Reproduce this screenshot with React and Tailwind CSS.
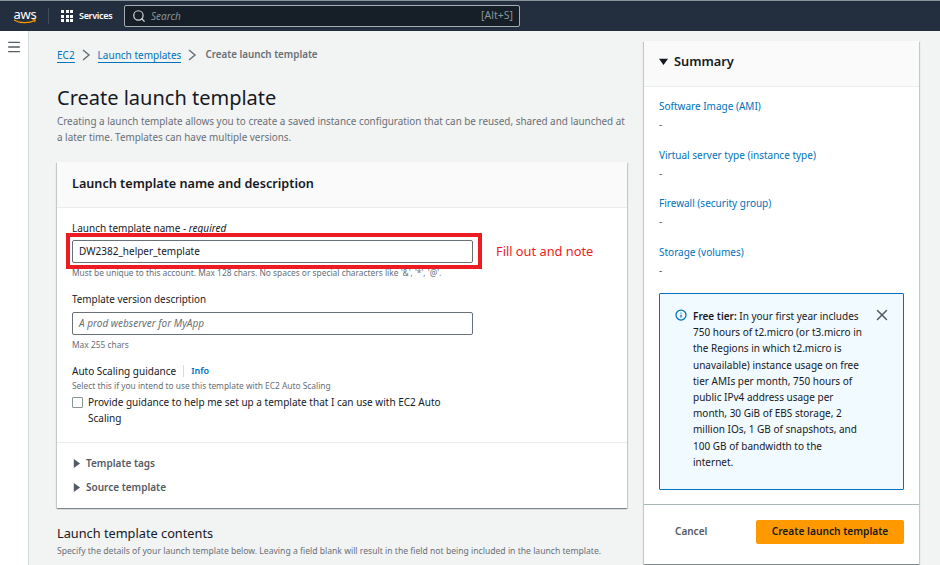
import React from 'react';
import { Menu, Search, Info, X } from 'lucide-react';

const font = "font-['Noto_Sans','Open_Sans',sans-serif]";

const Caret = ({ open }) => (
  <svg width="9" height="9" viewBox="0 0 10 10" className="shrink-0">
    {open ? <path d="M0 2h10L5 9z" fill="#16191f" /> : <path d="M2 0v10l7-5z" fill="#545b64" />}
  </svg>
);

const Chevron = ({ wide }) => (
  <svg width="9" height="12" viewBox="0 0 9 12" fill="none" stroke="#687078" strokeWidth="1.5" className={wide ? 'ml-[7px] mr-[8px]' : 'mx-[7px]'}>
    <path d="M1 1l6 5-6 5" />
  </svg>
);

const AwsLogo = () => (
  <div className="flex flex-col items-center w-[24px]">
    <span className="text-[13px] leading-[12px] text-white tracking-[-0.2px]">aws</span>
    <svg width="24" height="5" viewBox="0 0 24 5" fill="none" className="-mt-[1px]">
      <path d="M1 1c6 3.5 15 3.5 21 .5" stroke="#ff9900" strokeWidth="1.2" />
      <path d="M19.5 .6l3 .2-1 2.4" stroke="#ff9900" strokeWidth="1" />
    </svg>
  </div>
);

const GridIcon = () => (
  <div className="grid grid-cols-3 gap-[1.5px] w-[12px]">
    {Array.from({ length: 9 }).map((_, i) => (
      <span key={i} className="w-[3px] h-[3px] bg-white" />
    ))}
  </div>
);

const summary = [
  'Software Image (AMI)',
  'Virtual server type (instance type)',
  'Firewall (security group)',
  'Storage (volumes)',
];

export default function App() {
  return (
    <div className={`w-[940px] h-[565px] overflow-hidden flex flex-col ${font}`}>
      {/* Top nav */}
      <header className="h-[31px] shrink-0 bg-[#232f3e] border-t border-[#8a929b] flex items-center pl-[13px]">
        <AwsLogo />
        <div className="w-px h-[16px] bg-[#414d5c] ml-[11px] mr-[12px]" />
        <GridIcon />
        <span className="ml-[6px] w-[33px] whitespace-nowrap text-[9px] font-semibold text-white tracking-[-0.3px]">Services</span>
        <div className="ml-[12px] w-[396px] h-[22px] bg-[#161e28] border border-[#a5acb3] rounded-[2px] flex items-center pl-[7px] pr-[6px]">
          <Search size={14} color="#d5dbdb" strokeWidth={2} />
          <span className="ml-[5px] text-[10px] italic text-[#879596]">Search</span>
          <span className="ml-auto text-[10.5px] text-[#879596]">[Alt+S]</span>
        </div>
      </header>

      <div className="flex flex-1 min-h-0">
        {/* Side rail */}
        <aside className="w-[29px] shrink-0 bg-white border-r border-[#d5dbdb] pt-[8px] pl-[6px]">
          <Menu size={16} color="#545b64" strokeWidth={2} />
        </aside>

        <main className="flex-1 bg-[#f2f3f3] flex pl-[28px] gap-[17px] min-w-0">
          {/* Form column */}
          <div className="w-[570px] shrink-0">
            <nav className="flex items-center h-[14px] mt-[17px] text-[10px] leading-[14px]">
              <span className="text-[#0073bb] border-b border-[#0073bb]">EC2</span>
              <Chevron />
              <span className="text-[#0073bb] border-b border-[#0073bb]">Launch templates</span>
              <Chevron wide />
              <span className="font-semibold text-[9.8px] text-[#687078]">Create launch template</span>
            </nav>

            <h1 className="mt-[22px] text-[20px] leading-[28px] text-[#16191f]">Create launch template</h1>
            <p className="mt-[1px] text-[9.9px] leading-[16px] text-[#687078]">
              Creating a launch template allows you to create a saved instance configuration that can be reused, shared and launched at a later time. Templates can have multiple versions.
            </p>

            {/* Name and description card */}
            <section className="mt-[17px] bg-white shadow-[0_1px_1px_0_rgba(0,28,36,0.3),1px_1px_1px_0_rgba(0,28,36,0.15),-1px_1px_1px_0_rgba(0,28,36,0.15)]">
              <div className="h-[46px] pb-[2px] bg-[#fafafa] border-b border-[#eaeded] flex items-center px-[15px]">
                <h2 className="text-[12.65px] font-semibold text-[#16191f]">Launch template name and description</h2>
              </div>

              <div className="px-[15px] pt-[13px] pb-[16px] border-b border-[#eaeded]">
                <label className="block text-[10px] leading-[14px] text-[#16191f]">
                  Launch template name - <span className="italic">required</span>
                </label>
                <div className="relative mt-[5px] w-[401px]">
                  <div className="h-[23px] border border-[#687078] rounded-[2px] flex items-center px-[6px] text-[10px] text-[#16191f]">
                    DW2382_helper_template
                  </div>
                  {/* Annotation over the screenshot */}
                  <div className="absolute -left-[6px] -top-[7px] w-[416px] h-[36px] border-[4px] border-[#ed1c24]" />
                  <span className="absolute left-[424px] -top-[1px] whitespace-nowrap text-[12.8px] leading-[24px] text-[#ed1c24]">
                    Fill out and note
                  </span>
                </div>
                <p className="mt-[3px] text-[8.4px] leading-[13px] text-[#687078]">
                  Must be unique to this account. Max 128 chars. No spaces or special characters like '&amp;', '*', '@'.
                </p>

                <label className="block mt-[13px] text-[9.9px] leading-[14px] text-[#16191f]">Template version description</label>
                <div className="mt-[6px] w-[401px] h-[23px] border border-[#687078] rounded-[2px] flex items-center px-[6px] text-[10px] italic text-[#687078]">
                  A prod webserver for MyApp
                </div>
                <p className="mt-[3px] text-[8.4px] leading-[13px] text-[#687078]">Max 255 chars</p>

                <div className="mt-[13px] flex items-center text-[10px] leading-[14px]">
                  <span className="text-[#16191f]">Auto Scaling guidance</span>
                  <span className="w-px h-[12px] bg-[#d5dbdb] mx-[7px]" />
                  <span className="font-semibold text-[#0073bb] text-[9px]">Info</span>
                </div>
                <p className="mt-[1px] text-[8.4px] leading-[13px] text-[#687078]">
                  Select this if you intend to use this template with EC2 Auto Scaling
                </p>
                <div className="mt-[2px] flex items-start">
                  <span className="mt-[3px] w-[11px] h-[11px] shrink-0 border border-[#879596] rounded-[1px] bg-white" />
                  <span className="ml-[5px] w-[360px] text-[10px] leading-[16px] text-[#16191f]">
                    Provide guidance to help me set up a template that I can use with EC2 Auto Scaling
                  </span>
                </div>
              </div>

              <div className="pl-[15px] pt-[13px] pb-[14px] flex flex-col gap-[10px]">
                <div className="flex items-center gap-[5px] h-[14px]">
                  <Caret />
                  <span className="text-[10px] font-semibold text-[#545b64]">Template tags</span>
                </div>
                <div className="flex items-center gap-[5px] h-[14px]">
                  <Caret />
                  <span className="text-[10px] font-semibold text-[#545b64]">Source template</span>
                </div>
              </div>
            </section>

            <h3 className="mt-[16px] text-[12.75px] leading-[18px] text-[#16191f]">Launch template contents</h3>
            <p className="mt-[2px] text-[8.6px] leading-[14px] text-[#687078] whitespace-nowrap">
              Specify the details of your launch template below. Leaving a field blank will result in the field not being included in the launch template.
            </p>
          </div>

          {/* Summary column */}
          <aside className="w-[275px] shrink-0 mt-[10px] self-start bg-white shadow-[0_1px_1px_0_rgba(0,28,36,0.3),1px_1px_1px_0_rgba(0,28,36,0.15),-1px_1px_1px_0_rgba(0,28,36,0.15)]">
            <div className="h-[46px] pb-[4px] bg-[#fafafa] border-b border-[#eaeded] flex items-center pl-[15px] gap-[6px]">
              <Caret open />
              <h2 className="text-[12.8px] font-semibold text-[#16191f]">Summary</h2>
            </div>

            <div className="px-[15px] pt-[11px] pb-[14px] border-b border-[#aab7b8]">
              <div className="flex flex-col gap-[14.7px]">
                {summary.map((label) => (
                  <div key={label} className="text-[10px] leading-[16px]">
                    <div className="text-[#0073bb]">{label}</div>
                    <div className="mt-[2px] text-[#545b64]">-</div>
                  </div>
                ))}
              </div>

              <div className="relative mt-[15px] h-[197px] border border-[#0073bb] rounded-[1px] bg-[#f1faff] pl-[33px] pt-[14px]">
                <Info size={12} color="#0073bb" strokeWidth={2.5} className="absolute left-[15px] top-[15px]" />
                <X size={18} color="#545b64" strokeWidth={2} className="absolute right-[12px] top-[12px]" />
                <p className="text-[10px] leading-[16.2px] text-[#16191f] w-[169px]">
                  <span className="font-semibold">Free tier:</span> In your first year includes 750 hours of t2.micro (or t3.micro in the Regions in which t2.micro is unavailable) instance usage on free tier AMIs per month, 750 hours of public IPv4 address usage per month, 30 GiB of EBS storage, 2 million IOs, 1 GB of snapshots, and 100 GB of bandwidth to the internet.
                </p>
              </div>
            </div>

            <div className="h-[59px] flex items-start justify-between pt-[15px] pl-[31px] pr-[15px]">
              <span className="mt-[4px] text-[10px] font-semibold text-[#545b64]">Cancel</span>
              <button className="w-[148px] h-[24px] bg-[#ff9900] rounded-[2px] text-[10.2px] font-semibold text-[#16191f]">
                Create launch template
              </button>
            </div>
          </aside>
        </main>
      </div>
    </div>
  );
}
